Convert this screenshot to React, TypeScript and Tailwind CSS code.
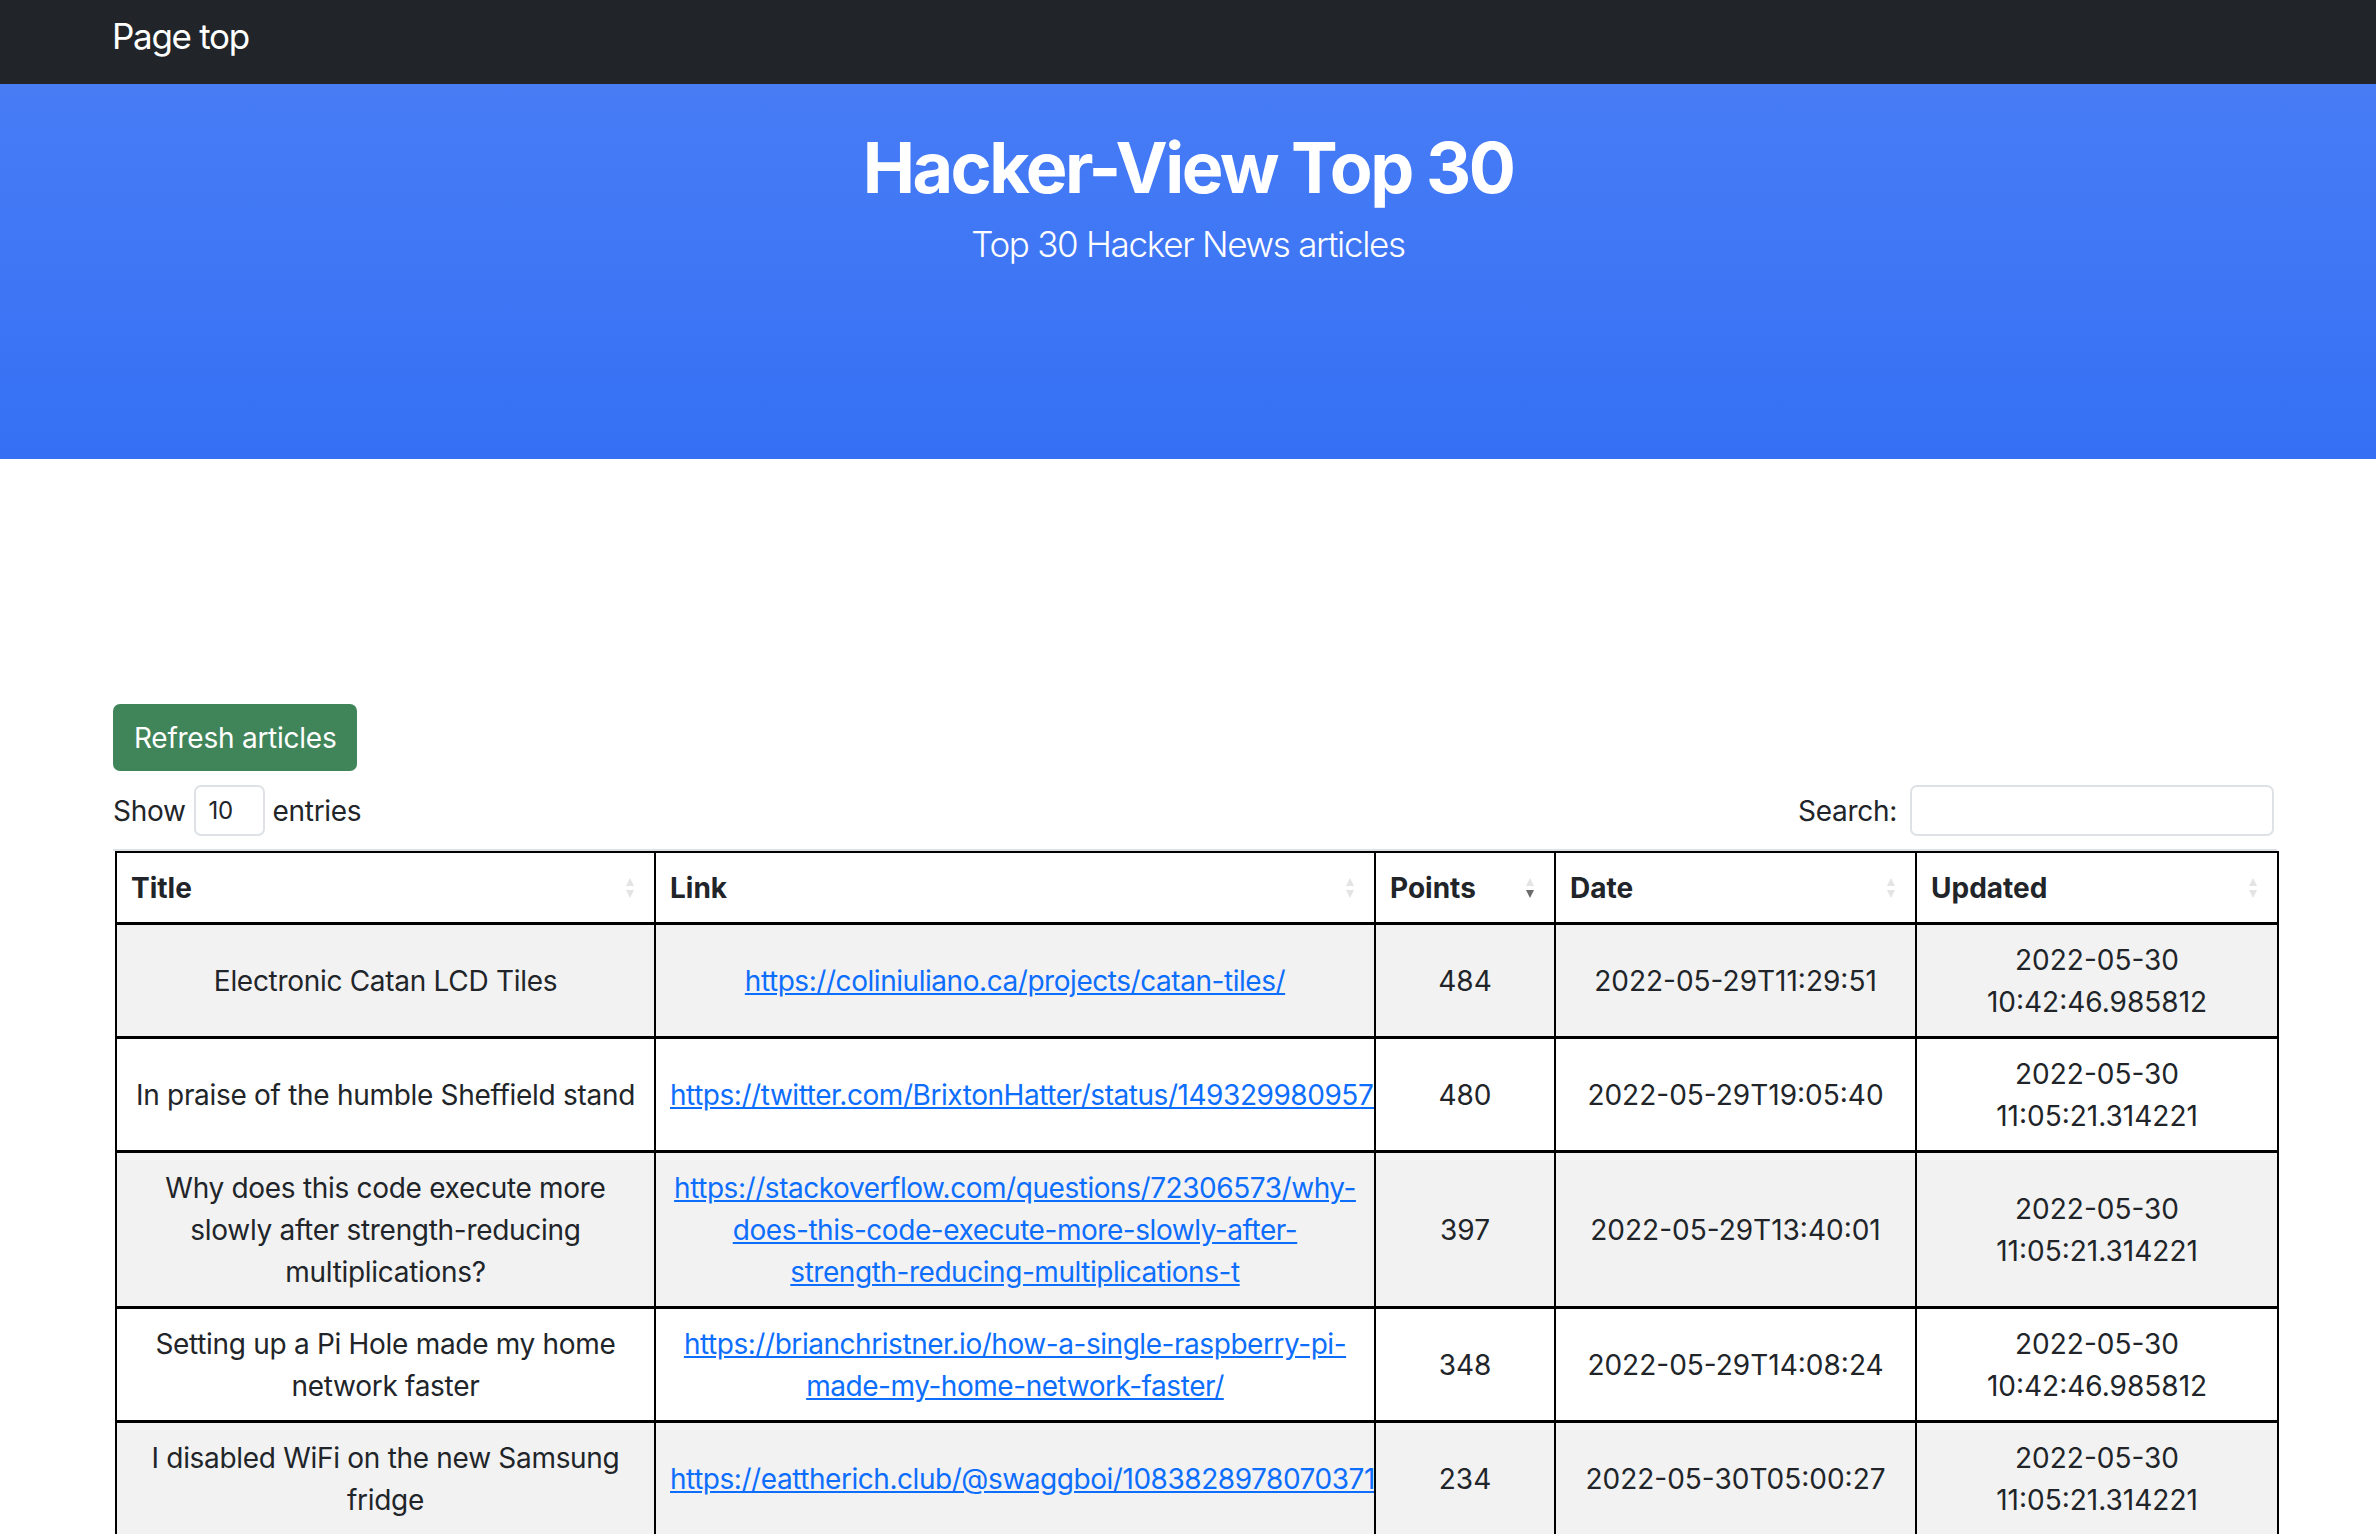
import React from 'react'

type Article = {
  title: string[]
  link: string[]
  href: string
  points: number
  date: string
  updated: [string, string]
}

const articles: Article[] = [
  {
    title: ['Electronic Catan LCD Tiles'],
    link: ['https://coliniuliano.ca/projects/catan-tiles/'],
    href: 'https://coliniuliano.ca/projects/catan-tiles/',
    points: 484,
    date: '2022-05-29T11:29:51',
    updated: ['2022-05-30', '10:42:46.985812'],
  },
  {
    title: ['In praise of the humble Sheffield stand'],
    link: ['https://twitter.com/BrixtonHatter/status/1493299809577762816'],
    href: 'https://twitter.com/BrixtonHatter/status/1493299809577762816',
    points: 480,
    date: '2022-05-29T19:05:40',
    updated: ['2022-05-30', '11:05:21.314221'],
  },
  {
    title: ['Why does this code execute more', 'slowly after strength-reducing', 'multiplications?'],
    link: [
      'https://stackoverflow.com/questions/72306573/why-',
      'does-this-code-execute-more-slowly-after-',
      'strength-reducing-multiplications-t',
    ],
    href: 'https://stackoverflow.com/questions/72306573/why-does-this-code-execute-more-slowly-after-strength-reducing-multiplications-t',
    points: 397,
    date: '2022-05-29T13:40:01',
    updated: ['2022-05-30', '11:05:21.314221'],
  },
  {
    title: ['Setting up a Pi Hole made my home', 'network faster'],
    link: ['https://brianchristner.io/how-a-single-raspberry-pi-', 'made-my-home-network-faster/'],
    href: 'https://brianchristner.io/how-a-single-raspberry-pi-made-my-home-network-faster/',
    points: 348,
    date: '2022-05-29T14:08:24',
    updated: ['2022-05-30', '10:42:46.985812'],
  },
  {
    title: ['I disabled WiFi on the new Samsung', 'fridge'],
    link: ['https://eattherich.club/@swaggboi/108382897807037142'],
    href: 'https://eattherich.club/@swaggboi/108382897807037142',
    points: 234,
    date: '2022-05-30T05:00:27',
    updated: ['2022-05-30', '11:05:21.314221'],
  },
]

function SortIcon({ active }: { active?: boolean }) {
  return (
    <span className="flex flex-col items-center gap-[4px] mr-[6px] shrink-0">
      <svg width="8" height="8" viewBox="0 0 8 8">
        <polygon points="4,0 8,8 0,8" fill="#e4e4e4" />
      </svg>
      <svg width="8" height="8" viewBox="0 0 8 8">
        <polygon points="0,0 8,0 4,8" fill={active ? '#6b6b6b' : '#e4e4e4'} />
      </svg>
    </span>
  )
}

const headers = [
  { label: 'Title', w: 'w-[539px]' },
  { label: 'Link', w: 'w-[720px]' },
  { label: 'Points', w: 'w-[180px]', active: true },
  { label: 'Date', w: 'w-[361px]' },
  { label: 'Updated', w: 'w-[362px]' },
]

export default function App() {
  const cell = 'border-x-2 border-black px-[14px] pt-[14px] pb-[13px] text-center align-middle'

  return (
    <div className="min-h-screen bg-white text-[#212529] font-['Inter','Noto_Sans',sans-serif]">
      {/* Navbar */}
      <nav className="h-[84px] bg-[#212529]">
        <div className="ml-[112px] pt-[10px] text-[35px] leading-[52px] tracking-[-1.3px] text-white">Page top</div>
      </nav>

      {/* Hero */}
      <header className="h-[375px] bg-gradient-to-b from-[#477cf5] to-[#3570f4] pt-[42px] text-center text-white">
        <h1 className="text-[70px] font-bold leading-[84px] tracking-[-2.5px]">Hacker-View Top 30</h1>
        <p className="mt-[8px] text-[35px] font-light leading-[52px] tracking-[-1.3px]">Top 30 Hacker News articles</p>
      </header>

      <main className="ml-[113px] w-[2164px] pt-[245px]">
        <button className="h-[67px] rounded-[7px] bg-[#40855a] px-[21px] text-[28px] leading-[42px] tracking-[-0.25px] text-white">
          Refresh articles
        </button>

        {/* Length + search */}
        <div className="mt-[14px] flex items-center justify-between pr-[3px] tracking-[-0.3px]">
          <div className="flex items-center text-[28px] leading-[42px]">
            <span>Show</span>
            <div className="mx-[8px] flex h-[51px] w-[71px] items-center rounded-[7px] border-2 border-[#dee2e6] pl-[13px] text-[24px]">
              10
            </div>
            <span>entries</span>
          </div>
          <div className="flex items-center text-[28px] leading-[42px]">
            <span>Search:</span>
            <div className="ml-[13px] h-[51px] w-[364px] rounded-[7px] border-2 border-[#dee2e6]" />
          </div>
        </div>

        {/* Table */}
        <div className="mt-[13px] border-t-2 border-[#dee2e6] pl-[2px]">
          <table className="w-[2162px] table-fixed border-collapse text-[28px] leading-[42px]">
            <thead>
              <tr className="border-t-2 border-b-[3px] border-black">
                {headers.map((h) => (
                  <th key={h.label} className={`${h.w} border-x-2 border-black px-[14px] pt-[14px] pb-[13px] text-left font-bold`}>
                    <div className="flex items-center justify-between">
                      <span>{h.label}</span>
                      <SortIcon active={h.active} />
                    </div>
                  </th>
                ))}
              </tr>
            </thead>
            <tbody>
              {articles.map((a, i) => (
                <tr key={a.href} className={`border-b-[3px] border-black ${i % 2 === 0 ? 'bg-[#f2f2f2]' : 'bg-white'}`}>
                  <td className={`${cell} tracking-[-0.3px]`}>
                    {a.title.map((t) => (
                      <div key={t} className="whitespace-nowrap">
                        {t}
                      </div>
                    ))}
                  </td>
                  <td className={`${cell} overflow-hidden tracking-[-0.45px]`}>
                    <a href={a.href} className="text-[#0d6efd] underline">
                      {a.link.map((l) => (
                        <div key={l} className="whitespace-nowrap">
                          {l}
                        </div>
                      ))}
                    </a>
                  </td>
                  <td className={cell}>{a.points}</td>
                  <td className={cell}>{a.date}</td>
                  <td className={cell}>
                    <div>{a.updated[0]}</div>
                    <div>{a.updated[1]}</div>
                  </td>
                </tr>
              ))}
            </tbody>
          </table>
        </div>
      </main>
    </div>
  )
}
